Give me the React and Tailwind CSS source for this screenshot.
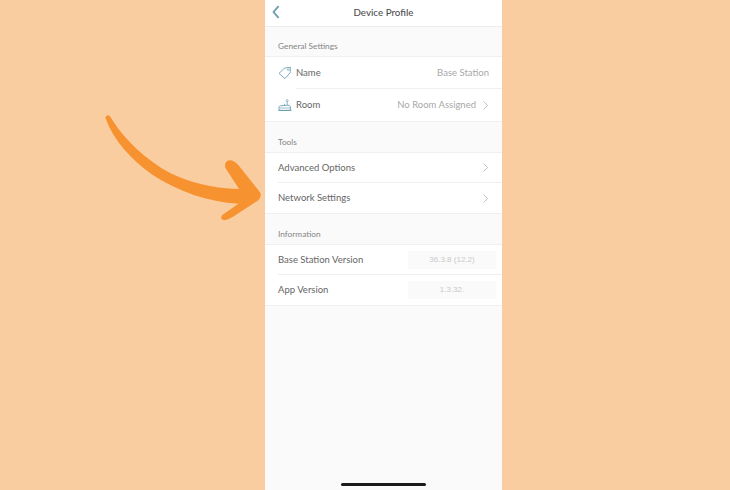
const font = { fontFamily: '"Lato", "Liberation Sans", sans-serif' };

function Chevron() {
  return (
    <svg width="6" height="9" viewBox="0 0 6 9" fill="none" className="shrink-0">
      <path d="M0.6 0.6 L4.6 4.5 L0.6 8.4" stroke="#b0b0b0" strokeWidth="0.8" />
    </svg>
  );
}

function TagIcon() {
  return (
    <svg width="14" height="14" viewBox="0 0 14 14" fill="none" className="shrink-0">
      <path d="M1 7.4 L6.4 2.2 L12.4 1.2 L12.2 6.6 L6.9 12.6 Z" stroke="#6f9fb2" strokeWidth="0.9" strokeLinejoin="round" />
      <circle cx="10.2" cy="3.6" r="0.8" stroke="#6f9fb2" strokeWidth="0.7" />
    </svg>
  );
}

function RoomIcon() {
  return (
    <svg width="14" height="14" viewBox="0 0 14 14" fill="none" className="shrink-0">
      <path d="M1 12 V9.5 Q1 8 2.5 7.8 L10 7.2 Q12 7.2 12.4 8.8 V12" stroke="#6f9fb2" strokeWidth="0.9" />
      <path d="M0.4 12.4 H13.4" stroke="#6f9fb2" strokeWidth="1.2" />
      <path d="M1.5 10 H12" stroke="#6f9fb2" strokeWidth="0.7" />
      <path d="M9.2 7 V3.4" stroke="#6f9fb2" strokeWidth="0.8" />
      <path d="M6.4 7.2 V5.8" stroke="#6f9fb2" strokeWidth="0.8" />
      <circle cx="9.2" cy="2.6" r="1" stroke="#6f9fb2" strokeWidth="0.7" />
    </svg>
  );
}

function SectionLabel({ children, h }) {
  return (
    <div className={`${h} flex items-end pl-[13px] pb-[4px] text-[8.3px] leading-[11px] text-[#858585]`}>
      {children}
    </div>
  );
}

function Row({ label, icon, right, h, last }) {
  return (
    <div className={`${h} flex items-stretch pl-[13px]`}>
      {icon && <div className="flex items-center w-[18px] shrink-0">{icon}</div>}
      <div className={`flex-1 flex items-center justify-between pr-[13px] ${last ? "" : "border-b border-[#efefef]"}`}>
        <span className="mt-[1px] text-[9.5px] text-[#666666]">{label}</span>
        {right}
      </div>
    </div>
  );
}

function Value({ children, chevron }) {
  return (
    <span className="mt-[1px] flex items-center gap-[7px] text-[9.5px] text-[#a8a8a8]">
      {children}
      {chevron && <Chevron />}
    </span>
  );
}

function VersionBox({ children }) {
  return (
    <span className="w-[88px] -mr-[7px] h-[18px] flex items-center justify-center bg-[#fafafa] text-[8px] text-[#c9c9c9] font-['Liberation_Sans']">
      {children}
    </span>
  );
}

function Group({ children }) {
  return <div className="bg-white border-y border-[#efefef]">{children}</div>;
}

export default function App() {
  return (
    <div className="relative h-[490px] w-[730px] overflow-hidden bg-[#facda1]" style={font}>
      <div className="ml-[265px] flex h-full w-[237px] flex-col bg-[#fafafa]">
        <header className="relative flex h-[27px] shrink-0 items-center justify-center bg-white border-b border-[#eeeeee]">
          <svg width="8" height="14" viewBox="0 0 8 14" fill="none" className="absolute left-[7px] top-[5px]">
            <path d="M6.6 1.2 L1.6 7 L6.6 12.8" stroke="#6f9fb2" strokeWidth="1.9" />
          </svg>
          <span className="text-[9.8px] font-medium text-[#4f4f4f] -mt-[1px]">Device Profile</span>
        </header>

        <SectionLabel h="h-[29px]">General Settings</SectionLabel>
        <Group>
          <Row h="h-[32px]" label="Name" icon={<TagIcon />} right={<Value>Base Station</Value>} />
          <Row h="h-[32px]" last label="Room" icon={<RoomIcon />} right={<Value chevron>No Room Assigned</Value>} />
        </Group>

        <SectionLabel h="h-[30px]">Tools</SectionLabel>
        <Group>
          <Row h="h-[30px]" label="Advanced Options" right={<Chevron />} />
          <Row h="h-[30px]" last label="Network Settings" right={<Chevron />} />
        </Group>

        <SectionLabel h="h-[30px]">Information</SectionLabel>
        <Group>
          <Row h="h-[30px]" label="Base Station Version" right={<VersionBox>36.3.8 (12.2)</VersionBox>} />
          <Row h="h-[30px]" last label="App Version" right={<VersionBox>1.3.32.</VersionBox>} />
        </Group>

        <div className="mt-auto mb-[4px] mx-auto h-[3px] w-[85px] rounded-full bg-[#1a1a1a]" />
      </div>

      <svg width="175" height="125" viewBox="0 0 525 375" className="absolute left-[95px] top-[105px]">
        <path
          d="M31 38 Q36 25 46 35 C 75 85 125 140 200 190 C 270 232 350 250 432 252 L 392 190 Q 385 172 402 166 Q 415 164 430 180 L 495 262 Q 502 275 488 287 L 430 325 Q 405 343 388 346 Q 372 343 382 330 L 430 296 C 340 292 250 260 170 208 C 105 160 55 105 31 38 Z"
          fill="#f79230"
        />
      </svg>
    </div>
  );
}
